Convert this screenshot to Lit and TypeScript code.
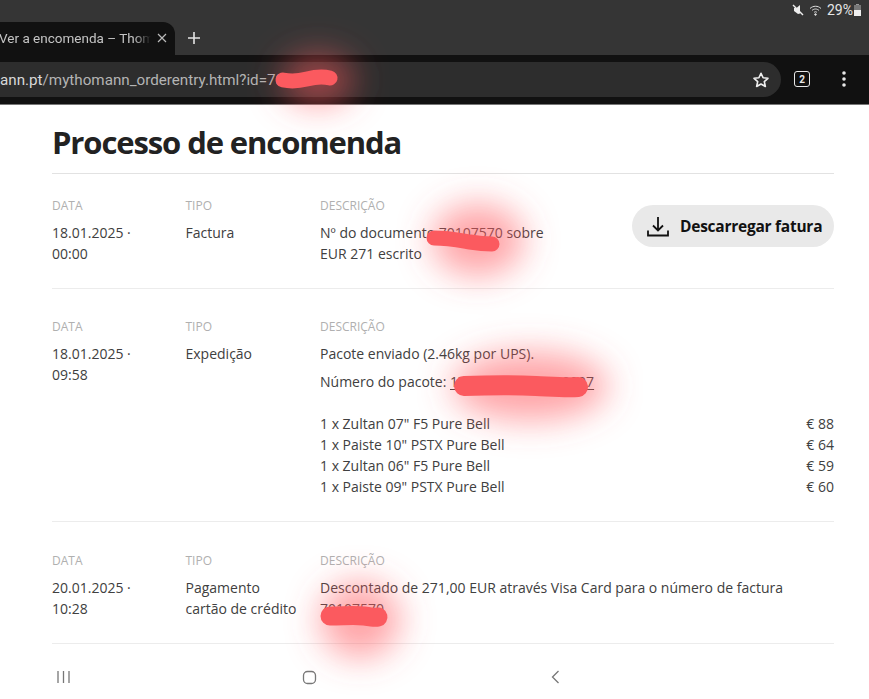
import { LitElement, html, css, svg } from "lit";
import { customElement } from "lit/decorators.js";

const items: [string, string][] = [
  ['1 x Zultan 07" F5 Pure Bell', "€ 88"],
  ['1 x Paiste 10" PSTX Pure Bell', "€ 64"],
  ['1 x Zultan 06" F5 Pure Bell', "€ 59"],
  ['1 x Paiste 09" PSTX Pure Bell', "€ 60"],
];

@customElement("app-root")
export class AppRoot extends LitElement {
  static styles = css`
    :host { display: block; width: 869px; height: 699px; position: relative; overflow: hidden; background: #fff; font-family: "Open Sans", sans-serif; color: #404040; }
    .chrome { height: 105px; display: flex; flex-direction: column; font-family: Roboto, sans-serif; border-bottom: 1px solid #777; box-sizing: border-box; }
    .status { height: 22px; background: #353535; display: flex; justify-content: flex-end; align-items: center; gap: 4px; padding: 0 8px 3px 0; box-sizing: border-box; color: #e6e6e6; font-size: 14px; }
    .status svg { display: block; }
    .tabs { height: 33px; background: #353535; display: flex; align-items: stretch; }
    .tab { width: 175px; background: #111; border-radius: 0 12px 0 0; display: flex; align-items: center; overflow: hidden; color: #c4c4c4; font-size: 13.5px; flex: none; padding-bottom: 2px; box-sizing: border-box; }
    .tab-title { margin-left: -1px; width: 155px; flex: none; white-space: nowrap; overflow: hidden; -webkit-mask-image: linear-gradient(90deg, #000 135px, transparent 152px); mask-image: linear-gradient(90deg, #000 135px, transparent 152px); }
    .tab svg { flex: none; margin-left: 2px; }
    .plus { margin-left: 12px; align-self: center; display: block; margin-bottom: 2px; }
    .toolbar { flex: 1; background: #111; display: flex; align-items: flex-start; padding-top: 7px; }
    .omni { width: 781px; height: 35px; flex: none; background: #2d2d2d; border-radius: 0 18px 18px 0; display: flex; align-items: center; justify-content: space-between; box-sizing: border-box; padding-right: 11px; overflow: hidden; }
    .url { font-size: 15.2px; color: #b4b4b4; white-space: nowrap; }
    .url b { font-weight: 400; color: #d8d8d8; }
    .tool-icons { display: flex; align-items: center; gap: 32px; margin: 9px 0 0 13px; }
    .tool-icons svg { display: block; }
    .count { width: 16px; height: 16px; border: 1.6px solid #e8e8e8; border-radius: 3px; box-sizing: border-box; color: #e8e8e8; font-size: 10px; font-weight: 700; display: flex; align-items: center; justify-content: center; }
    main { padding: 0 35px 0 52px; }
    h1 { margin: 0; height: 68px; font-size: 31px; line-height: 74px; font-weight: 700; color: #222; letter-spacing: -1.1px; border-bottom: 1px solid #e2e2e2; white-space: nowrap; }
    .row { display: grid; grid-template-columns: 133.5px 134.5px 1fr; padding: 29px 0 24px; border-bottom: 1px solid #ececec; font-size: 14px; line-height: 21px; }
    .row.first { padding: 23px 0 23.5px; grid-template-columns: 133.5px 134.5px 1fr auto; }
    .row.last { padding-top: 30px; }
    .label { font-size: 12px; line-height: 18px; color: #b0b0b0; margin-bottom: 7px; display: block; }
    .desc p { margin: 0 0 7.5px; }
    .track u { text-underline-offset: 2px; }
    .list { margin-top: 21px; }
    .item { display: flex; justify-content: space-between; }
    .btn { align-self: start; margin-top: 8px; height: 42px; width: 202px; border-radius: 21px; background: #e9e9e9; display: flex; align-items: center; padding-left: 14px; gap: 10px; box-sizing: border-box; color: #111; font-size: 15.5px; font-weight: 700; letter-spacing: -.25px; white-space: nowrap; }
    .nav { position: absolute; left: 0; right: 0; top: 660px; height: 34px; }
    .nav svg { display: block; }
    .marks { position: absolute; inset: 0; pointer-events: none; }
  `;

  private blobs() {
    return svg`<svg class="marks" width="869" height="699" viewBox="0 0 869 699">
      <defs><filter id="b" x="-80%" y="-80%" width="260%" height="260%"><feGaussianBlur stdDeviation="17"/></filter></defs>
      <g fill="#ff5a5f" fill-opacity=".55" filter="url(#b)">
        <ellipse cx="318" cy="80" rx="36" ry="26"/>
        <ellipse cx="478" cy="240" rx="46" ry="36"/>
        <ellipse cx="530" cy="386" rx="78" ry="34"/>
        <ellipse cx="360" cy="620" rx="40" ry="38"/>
      </g>
      <g fill="none" stroke="#fb5a5f" stroke-linecap="round" stroke-linejoin="round">
        <path stroke-width="15" d="M283 80c10 2 16 1 24-1s14-3 23-1"/>
        <path stroke-width="15" d="M434 238c14 0 24 2 36 4s14 2 22 2"/>
        <path stroke-width="20" d="M464 386c30-1 52-1 72 0s32 2 42 1"/>
        <path stroke-width="19" d="M330 616c14 0 24-1 34 0s10 2 14 1"/>
      </g>
    </svg>`;
  }

  render() {
    return html`
      <div class="chrome">
        <div class="status">
          <svg width="14" height="14" viewBox="0 0 14 14"><path fill="#eee" d="M3 5h2.500L9 2v8.500l-2 .5L3 8z"/><path stroke="#eee" stroke-width="1.400" d="M2 2l10 10"/></svg>
          <svg width="14" height="12" viewBox="0 0 14 12" fill="none" stroke="#ddd"><path d="M1 4.500c3-3 8-3 11 0M3 6.500c2-2 5-2 7 0M5 8.500c1-1 2-1 3 0"/><circle cx="6.500" cy="10.500" r=".8" fill="#ddd"/></svg>
          <span>29%</span>
          <svg style="margin-left:-3px" width="7" height="12" viewBox="0 0 7 12"><rect x="0" y="1" width="7" height="11" fill="#777"/><rect x="0" y="6" width="7" height="6" fill="#eee"/><rect x="2" y="0" width="3" height="1" fill="#999"/></svg>
        </div>
        <div class="tabs">
          <div class="tab">
            <span class="tab-title">Ver a encomenda – Thomann</span>
            <svg width="12" height="12" viewBox="0 0 12 12" stroke="#bbb" stroke-width="1.200"><path d="M2 2l8 8M10 2l-8 8"/></svg>
          </div>
          <svg class="plus" width="14" height="14" viewBox="0 0 14 14" stroke="#e4e4e4" stroke-width="1.600"><path d="M7 1v12M1 7h12"/></svg>
        </div>
        <div class="toolbar">
          <div class="omni">
            <span class="url"><b>ann.pt</b>/mythomann_orderentry.html?id=78</span>
            <svg width="18" height="18" viewBox="0 0 24 24" fill="none" stroke="#eee" stroke-width="2.200" stroke-linejoin="round"><path d="M12 3l2.800 6 6.500.7-4.900 4.400 1.400 6.500L12 17.300l-5.800 3.300 1.400-6.500-4.900-4.400 6.500-.7z"/></svg>
          </div>
          <div class="tool-icons">
            <div class="count">2</div>
            <svg width="4" height="16" viewBox="0 0 4 16" fill="#e8e8e8"><circle cx="2" cy="2" r="1.800"/><circle cx="2" cy="8" r="1.800"/><circle cx="2" cy="14" r="1.800"/></svg>
          </div>
        </div>
      </div>
      <main>
        <h1>Processo de encomenda</h1>
        <section class="row first">
          <div><span class="label">DATA</span>18.01.2025 ·<br />00:00</div>
          <div><span class="label">TIPO</span>Factura</div>
          <div class="desc"><span class="label">DESCRIÇÃO</span>Nº do documento 70107570 sobre<br />EUR 271 escrito</div>
          <div class="btn">
            <svg width="24" height="24" viewBox="0 0 24 24" fill="none" stroke="#111" stroke-width="1.800"><path d="M12 3v13M7 11.500l5 5 5-5M2 16.500v5h20v-5"/></svg>
            Descarregar fatura
          </div>
        </section>
        <section class="row">
          <div><span class="label">DATA</span>18.01.2025 ·<br />09:58</div>
          <div><span class="label">TIPO</span>Expedição</div>
          <div class="desc">
            <span class="label">DESCRIÇÃO</span>
            <p>Pacote enviado (2.46kg por UPS).</p>
            <p class="track">Número do pacote: <u>1Z0000000000000007</u></p>
            <div class="list">
              ${items.map(([n, p]) => html`<div class="item"><span>${n}</span><span>${p}</span></div>`)}
            </div>
          </div>
        </section>
        <section class="row last">
          <div><span class="label">DATA</span>20.01.2025 ·<br />10:28</div>
          <div><span class="label">TIPO</span>Pagamento<br />cartão de crédito</div>
          <div class="desc"><span class="label">DESCRIÇÃO</span>Descontado de 271,00 EUR através Visa Card para o número de factura<br />70107570</div>
        </section>
      </main>
      <div class="nav">
        <svg width="869" height="34" viewBox="0 0 869 34" fill="none" stroke="#777" stroke-width="1.300">
          <path d="M58 11v12M63.500 11v12M69 11v12"/>
          <rect x="303.500" y="11.500" width="12" height="12" rx="4"/>
          <path d="M558.500 11l-6 6 6 6"/>
        </svg>
      </div>
      ${this.blobs()}
    `;
  }
}
